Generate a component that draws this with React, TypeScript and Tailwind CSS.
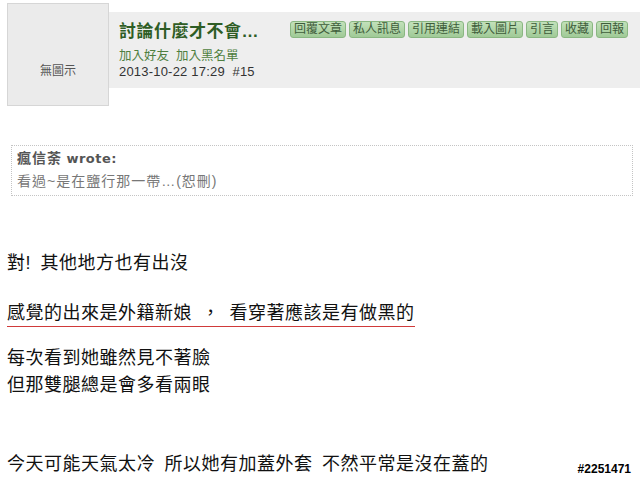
import React from 'react';

const actions = ['回覆文章', '私人訊息', '引用連結', '載入圖片', '引言', '收藏', '回報'];

const font = "font-['Liberation_Sans','Noto_Sans_CJK_TC',sans-serif]";

export default function App() {
  return (
    <div className={`relative w-[640px] h-[484px] overflow-hidden bg-white text-[#222] ${font}`}>
      {/* post header */}
      <div className="flex items-start">
        <div className="ml-[7px] mt-[3px] w-[102px] h-[103px] shrink-0 bg-[#ebebeb] border border-[#d6d6d6] flex justify-center pt-[59px] text-[12px] leading-[16px] text-[#555]">
          無圖示
        </div>
        <div className="mt-[12px] h-[76px] flex-1 bg-[#eeeeee] flex">
          <div className="pl-[10px] pt-[9px]">
            <div className="text-[17px] font-bold leading-[22px] tracking-[0.5px] text-[#2e5d25]">討論什麼才不會…</div>
            <div className="mt-[5px] text-[12.5px] leading-[16px] text-[#4e7f3f]">加入好友&nbsp;&nbsp;加入黑名單</div>
            <div className="text-[13px] leading-[16px] tracking-[0.2px] text-[#333]">2013-10-22 17:29&nbsp;&nbsp;#15</div>
          </div>
          <div className="ml-auto mr-[12px] mt-[9px] flex gap-[3px] h-[17px]">
            {actions.map((a) => (
              <button
                key={a}
                className="h-[17px] px-[3px] rounded-[3px] border border-[#8ab782] bg-linear-to-b from-[#c2e1ba] to-[#a0ca97] text-[12px] leading-[15px] text-[#3f5d3b]"
              >
                {a}
              </button>
            ))}
          </div>
        </div>
      </div>

      {/* quote */}
      <div className="ml-[11px] mt-[39px] w-[622px] h-[51px] border border-dotted border-[#c4c4c4] pl-[5px] pt-[1px]">
        <div className="leading-[22px] text-[#555] font-bold">
          <span className="text-[14px] tracking-[1px]">瘋信荼</span>{' '}
          <span className="text-[13px] tracking-[0.5px] font-['DejaVu_Sans',sans-serif]">wrote:</span>
        </div>
        <div className="leading-[22px] text-[14px] tracking-[1px] text-[#777]">看過~是在鹽行那一帶…(恕刪)</div>
      </div>

      {/* body */}
      <div className="pl-[7px] text-[18px] leading-[27px] tracking-[0.5px] text-[#111]">
        <p className="mt-[54px]">對!&#8194;其他地方也有出沒</p>
        <p className="mt-[23px]">
          <span className="inline-block leading-[25px] border-b border-[#d03a3a]">感覺的出來是外籍新娘&#8194;，&#8194;看穿著應該是有做黑的</span>
        </p>
        <p className="mt-[18px]">每次看到她雖然見不著臉</p>
        <p>但那雙腿總是會多看兩眼</p>
        <p className="mt-[52px]">今天可能天氣太冷&#8194;所以她有加蓋外套&#8194;不然平常是沒在蓋的</p>
      </div>

      <div className="absolute right-[9px] bottom-[6px] text-[12px] font-bold text-black [text-shadow:1px_0_#fff,-1px_0_#fff,0_1px_#fff,0_-1px_#fff]">
        #2251471
      </div>
    </div>
  );
}
